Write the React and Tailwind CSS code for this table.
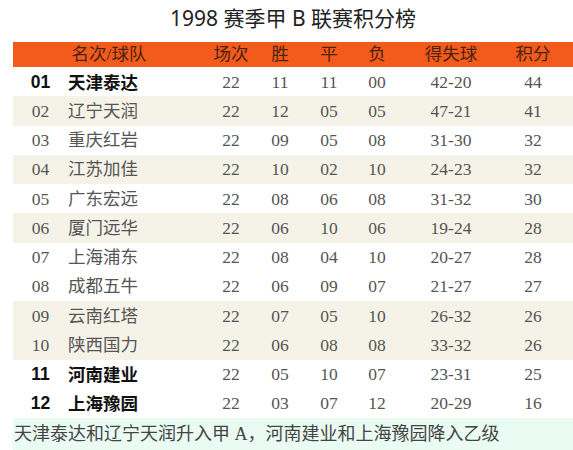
import React from "react";

const rows = [
  { rank: "01", team: "天津泰达", p: "22", w: "11", d: "11", l: "00", g: "42-20", pts: "44", bold: true },
  { rank: "02", team: "辽宁天润", p: "22", w: "12", d: "05", l: "05", g: "47-21", pts: "41", shade: true },
  { rank: "03", team: "重庆红岩", p: "22", w: "09", d: "05", l: "08", g: "31-30", pts: "32" },
  { rank: "04", team: "江苏加佳", p: "22", w: "10", d: "02", l: "10", g: "24-23", pts: "32", shade: true },
  { rank: "05", team: "广东宏远", p: "22", w: "08", d: "06", l: "08", g: "31-32", pts: "30" },
  { rank: "06", team: "厦门远华", p: "22", w: "06", d: "10", l: "06", g: "19-24", pts: "28", shade: true },
  { rank: "07", team: "上海浦东", p: "22", w: "08", d: "04", l: "10", g: "20-27", pts: "28" },
  { rank: "08", team: "成都五牛", p: "22", w: "06", d: "09", l: "07", g: "21-27", pts: "27" },
  { rank: "09", team: "云南红塔", p: "22", w: "07", d: "05", l: "10", g: "26-32", pts: "26", shade: true },
  { rank: "10", team: "陕西国力", p: "22", w: "06", d: "08", l: "08", g: "33-32", pts: "26", shade: true },
  { rank: "11", team: "河南建业", p: "22", w: "05", d: "10", l: "07", g: "23-31", pts: "25", bold: true },
  { rank: "12", team: "上海豫园", p: "22", w: "03", d: "07", l: "12", g: "20-29", pts: "16", bold: true },
];

const serif = "font-['Liberation_Serif','Noto_Sans_CJK_SC',serif]";

export default function App() {
  return (
    <div className="w-[573px] h-[450px] bg-white overflow-hidden pl-[13px]">
      <div className="h-[42px] flex items-center justify-center font-['Noto_Sans','Noto_Sans_CJK_SC',sans-serif] text-[21px] text-[#222] pb-[4px]">
        1998 赛季甲 B 联赛积分榜
      </div>

      <div className={`h-[25px] flex items-center bg-[#f35b1c] text-[#4a2410] text-[17.5px] ${serif}`}>
        <div className="w-[192px] text-center">名次/球队</div>
        <div className="w-[52px] text-center">场次</div>
        <div className="w-[46px] text-center">胜</div>
        <div className="w-[52px] text-center">平</div>
        <div className="w-[44px] text-center">负</div>
        <div className="w-[104px] text-center">得失球</div>
        <div className="w-[60px] text-center">积分</div>
      </div>

      {rows.map((r) => (
        <div
          key={r.rank}
          className={`h-[29.25px] flex items-center text-[17.5px] text-[#555] ${serif} ${r.shade ? "bg-[#f5f3e8]" : "bg-white"}`}
        >
          {r.bold ? (
            <>
              <div className="w-[55px] text-center font-['Liberation_Sans',sans-serif] font-bold text-[#111]">{r.rank}</div>
              <div className="w-[137px] font-['Noto_Sans_CJK_SC',sans-serif] font-bold text-[#111]">{r.team}</div>
            </>
          ) : (
            <>
              <div className="w-[55px] text-center">{r.rank}</div>
              <div className="w-[137px]">{r.team}</div>
            </>
          )}
          <div className="w-[52px] text-center">{r.p}</div>
          <div className="w-[46px] text-center">{r.w}</div>
          <div className="w-[52px] text-center">{r.d}</div>
          <div className="w-[44px] text-center">{r.l}</div>
          <div className="w-[104px] text-center">{r.g}</div>
          <div className="w-[60px] text-center">{r.pts}</div>
        </div>
      ))}

      <div className={`h-[33px] flex items-center bg-[#e9fbf3] text-[18px] text-[#444] ${serif} pl-[1px]`}>
        天津泰达和辽宁天润升入甲 A，河南建业和上海豫园降入乙级
      </div>
    </div>
  );
}
